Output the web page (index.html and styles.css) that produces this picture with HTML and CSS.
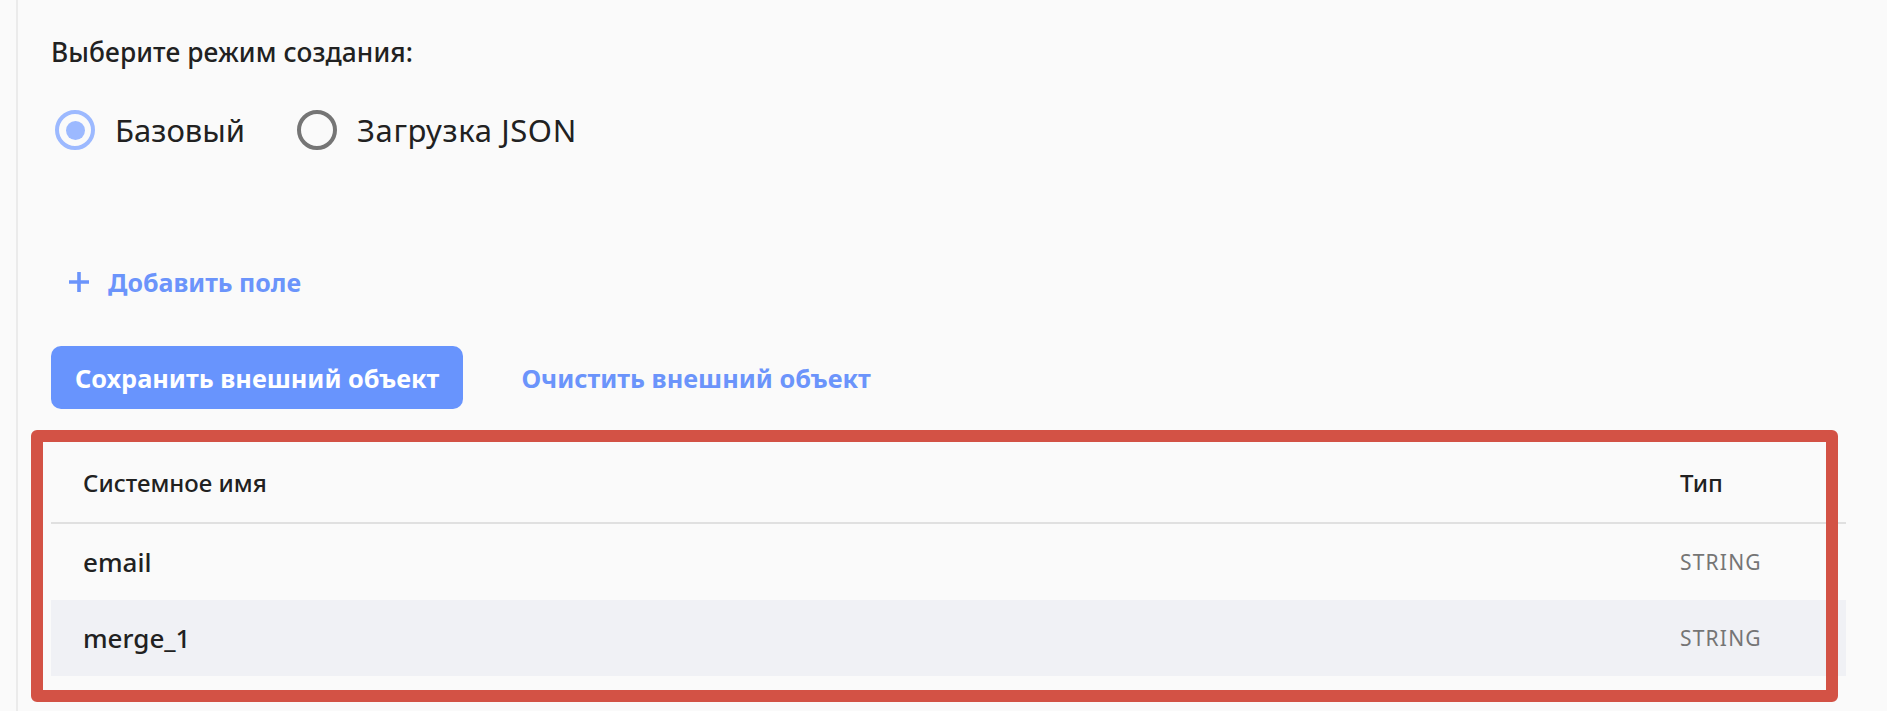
FILE: index.html
```html
<!DOCTYPE html>
<html lang="ru">
<head>
<meta charset="utf-8">
<title>Внешний объект</title>
<link rel="stylesheet" href="styles.css">
</head>
<body>
<div class="page">
  <div class="content">
    <div class="mode-title">Выберите режим создания:</div>
    <div class="radio-group">
      <label class="radio">
        <span class="radio-icon checked"></span>
        <span class="radio-label">Базовый</span>
      </label>
      <label class="radio">
        <span class="radio-icon"></span>
        <span class="radio-label wide">Загрузка JSON</span>
      </label>
    </div>

    <div class="add-field">
      <svg class="plus" width="22" height="22" viewBox="0 0 22 22" aria-hidden="true">
        <path d="M11 1v20M1 11h20" stroke="#6b94fb" stroke-width="3.6" fill="none"/>
      </svg>
      <span>Добавить поле</span>
    </div>

    <div class="actions">
      <button class="btn-primary">Сохранить внешний объект</button>
      <button class="btn-text">Очистить внешний объект</button>
    </div>

    <div class="table">
      <div class="row head">
        <div class="cell name">Системное имя</div>
        <div class="cell type">Тип</div>
      </div>
      <div class="row">
        <div class="cell name">email</div>
        <div class="cell type value">STRING</div>
      </div>
      <div class="row striped">
        <div class="cell name">merge_1</div>
        <div class="cell type value">STRING</div>
      </div>
    </div>
  </div>
  <div class="highlight"></div>
</div>
</body>
</html>
```

FILE: styles.css
```css
html, body {
  margin: 0;
  padding: 0;
  background: #fafafa;
}

body {
  font-family: "Noto Sans", "Open Sans", sans-serif;
  color: #212121;
  width: 1887px;
  height: 711px;
  overflow: hidden;
}

.page {
  position: relative;
  height: 711px;
  margin-left: 16px;
  border-left: 2px solid #ebebeb;
}

.content {
  padding: 36px 41px 0 33px;
}

.mode-title {
  font-size: 26.3px;
  line-height: 32px;
  font-weight: 500;
  letter-spacing: 0.1px;
}

.radio-group {
  display: flex;
  align-items: center;
  gap: 52px;
  margin-top: 42px;
  margin-left: 4px;
  height: 40px;
}

.radio {
  display: flex;
  align-items: center;
  gap: 20px;
}

.radio-icon {
  box-sizing: border-box;
  width: 40px;
  height: 40px;
  border-radius: 50%;
  border: 4.5px solid #757575;
  display: flex;
  align-items: center;
  justify-content: center;
}

.radio-icon.checked {
  border-color: #9cb9ff;
}

.radio-icon.checked::after {
  content: "";
  width: 19px;
  height: 19px;
  border-radius: 50%;
  background: #9cb9ff;
}

.radio-label {
  font-size: 31px;
  line-height: 40px;
  color: #212121;
}

.radio-label.wide {
  letter-spacing: 0.6px;
}

.add-field {
  display: flex;
  align-items: center;
  gap: 18px;
  margin-top: 116px;
  margin-left: 17px;
  height: 32px;
  color: #6b94fb;
  font-size: 25px;
  font-weight: 700;
}

.plus {
  display: block;
}

.actions {
  display: flex;
  align-items: center;
  gap: 34px;
  margin-top: 48px;
}

.btn-primary {
  font-family: inherit;
  font-size: 25.3px;
  font-weight: 700;
  color: #ffffff;
  background: #6894fd;
  border: none;
  border-radius: 10px;
  height: 63px;
  padding: 0 24px;
}

.btn-text {
  font-family: inherit;
  font-size: 25.3px;
  font-weight: 700;
  color: #6b94fb;
  background: transparent;
  border: none;
  height: 63px;
  padding: 0 24px;
}

.table {
  margin-top: 38px;
}

.row {
  display: grid;
  grid-template-columns: 1fr 166px;
  align-items: center;
  height: 76px;
}

.row.head {
  border-bottom: 2px solid #e0e0e0;
  padding-bottom: 4px;
  box-sizing: border-box;
  height: 77px;
}

.row.striped {
  background: #f0f1f5;
}

.cell.name {
  padding-left: 32px;
  font-size: 26px;
  font-weight: 500;
}

.head .cell {
  font-size: 24px;
  font-weight: 500;
}

.cell.value {
  font-size: 21px;
  letter-spacing: 1.2px;
  color: #757575;
}

.highlight {
  position: absolute;
  left: 13px;
  top: 430px;
  width: 1807px;
  height: 272px;
  box-sizing: border-box;
  border: 12px solid #d35245;
  border-radius: 6px;
  pointer-events: none;
}
```
